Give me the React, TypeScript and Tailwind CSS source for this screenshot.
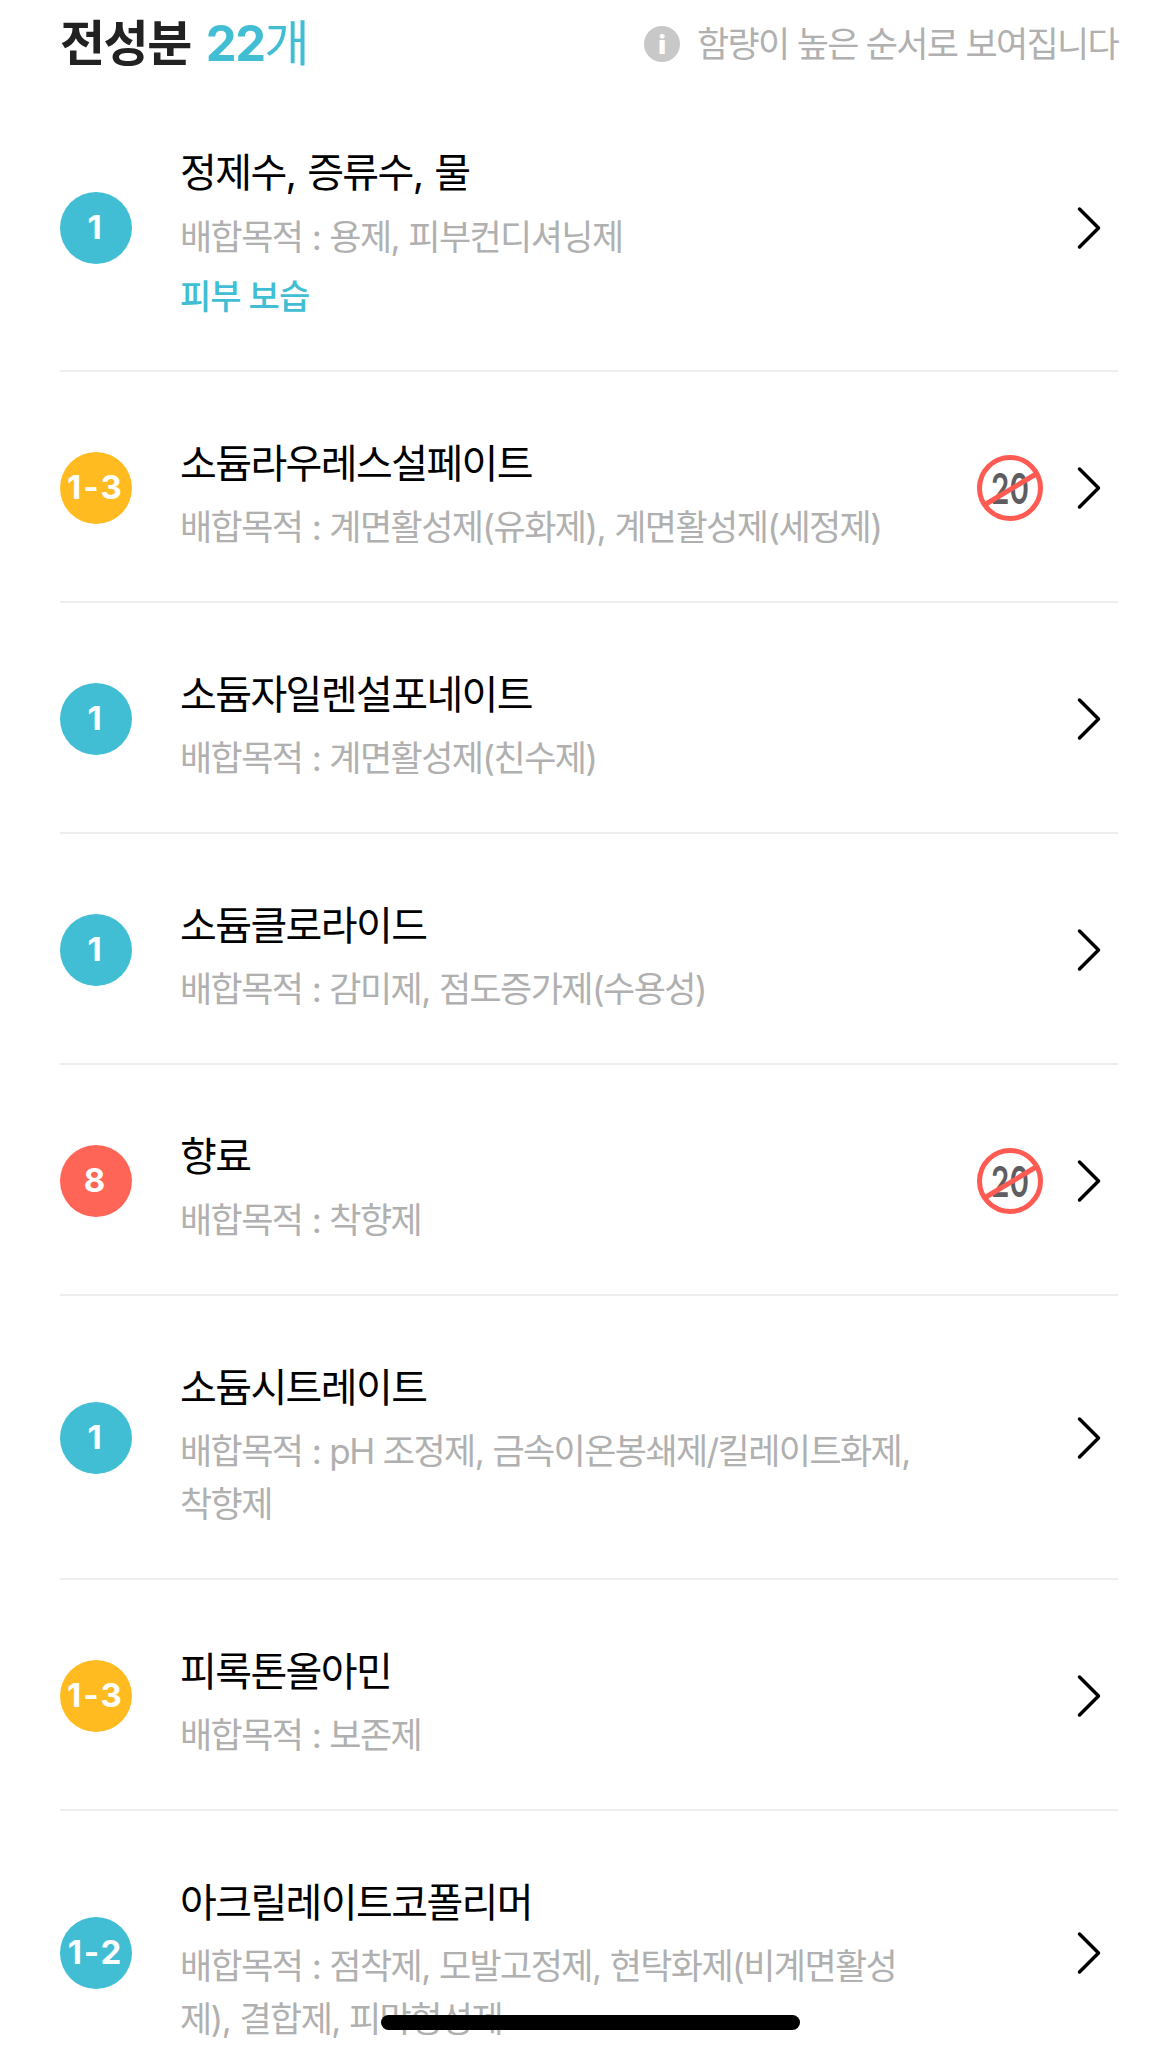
const rows = [
  { grade: "1", color: "bg-[#41bed3]", name: "정제수, 증류수, 물", purpose: "배합목적 : 용제, 피부컨디셔닝제", tag: "피부 보습" },
  { grade: "1-3", color: "bg-[#ffbb1f]", name: "소듐라우레스설페이트", purpose: "배합목적 : 계면활성제(유화제), 계면활성제(세정제)", no20: true },
  { grade: "1", color: "bg-[#41bed3]", name: "소듐자일렌설포네이트", purpose: "배합목적 : 계면활성제(친수제)" },
  { grade: "1", color: "bg-[#41bed3]", name: "소듐클로라이드", purpose: "배합목적 : 감미제, 점도증가제(수용성)" },
  { grade: "8", color: "bg-[#ff6557]", name: "향료", purpose: "배합목적 : 착향제", no20: true },
  { grade: "1", color: "bg-[#41bed3]", name: "소듐시트레이트", purpose: "배합목적 : pH 조정제, 금속이온봉쇄제/킬레이트화제, 착향제" },
  { grade: "1-3", color: "bg-[#ffbb1f]", name: "피록톤올아민", purpose: "배합목적 : 보존제" },
  { grade: "1-2", color: "bg-[#41bed3]", name: "아크릴레이트코폴리머", purpose: "배합목적 : 점착제, 모발고정제, 현탁화제(비계면활성제), 결합제, 피막형성제" },
];

function No20() {
  return (
    <svg width="66" height="66" viewBox="0 0 66 66" className="shrink-0 overflow-visible">
      <text x="33" y="48.5" textAnchor="middle" fontSize="43" fontWeight="600" fill="#5d5d62" fontFamily="Inter, sans-serif" textLength="38" lengthAdjust="spacingAndGlyphs">20</text>
      <circle cx="33" cy="33" r="30.5" fill="none" stroke="#ff5b52" strokeWidth="5" />
      <path d="M9 49 L59 19" stroke="#ff5b52" strokeWidth="5" />
    </svg>
  );
}

function Row({ row }: { row: (typeof rows)[number] }) {
  return (
    <div className="flex items-center border-b-2 border-[#eeeeee] py-[47px]">
      <div className={`mt-[2px] flex h-[72px] w-[72px] shrink-0 items-center justify-center rounded-full pr-[1px] ${row.color} text-[33px] font-bold tracking-[2px] text-white`}>
        {row.grade}
      </div>
      <div className={`ml-12 w-[740px] min-w-0 ${row.tag ? "pt-[15px]" : "pt-[18px]"}`}>
        <p className="text-[40px] leading-[54px] tracking-[-1.6px] [word-spacing:2px] text-black">{row.name}</p>
        <p className={`${row.tag ? "mt-[11px]" : "mt-[10px]"} text-[35px] leading-[53px] tracking-[-1.6px] [word-spacing:1px] text-[#b0b0b0]`}>{row.purpose}</p>
        {row.tag && <p className="mt-[6px] text-[34px] leading-[53px] font-medium tracking-[-1px] text-[#41bed3]">{row.tag}</p>}
      </div>
      <div className="mt-[2px] ml-auto flex items-center gap-[34px] pr-[17px]">
        {row.no20 && <No20 />}
        <svg width="24" height="44" viewBox="0 0 24 44" fill="none" className="shrink-0">
          <path d="M2.5 3 L21.5 22 L2.5 41" stroke="#000" strokeWidth="3.5" strokeLinecap="round" strokeLinejoin="round" />
        </svg>
      </div>
    </div>
  );
}

export default function App() {
  return (
    <div className="relative h-[2054px] w-[1163px] overflow-hidden bg-white pr-[45px] pl-[60px] font-['Inter','Noto_Sans_CJK_KR',sans-serif]">
      <div className="flex h-[84px] items-center justify-between pt-[4px]">
        <h1 className="text-[49px] font-bold tracking-[-1.5px] [word-spacing:5px] text-[#222222]">
          전성분 <span className="text-[#41bed3]">22</span><span className="font-normal text-[#41bed3]">개</span>
        </h1>
        <div className="flex items-center gap-[17px]">
          <span className="flex h-9 w-9 items-center justify-center rounded-full bg-[#c8c8c8] text-[26px] font-black text-white">i</span>
          <span className="text-[35px] tracking-[-1.7px] text-[#b0b0b0]">함량이 높은 순서로 보여집니다</span>
        </div>
      </div>
      {rows.map((row) => (
        <Row key={row.name} row={row} />
      ))}
      <div className="absolute bottom-[24px] left-[381px] h-[15px] w-[419px] rounded-full bg-black" />
    </div>
  );
}
